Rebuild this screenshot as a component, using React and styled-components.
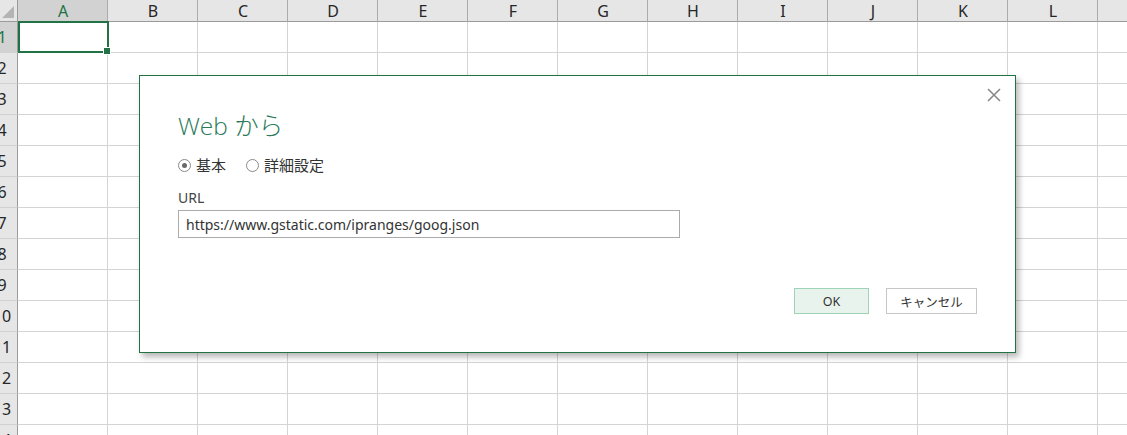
import React from "react";
import styled, { createGlobalStyle } from "styled-components";

const GlobalStyle = createGlobalStyle`
  html, body {
    margin: 0;
    padding: 0;
    background: #ffffff;
    overflow: hidden;
  }
  * { box-sizing: border-box; }
`;

const COLS = ["A", "B", "C", "D", "E", "F", "G", "H", "I", "J", "K", "L", "M"];
const ROWS = [1, 2, 3, 4, 5, 6, 7, 8, 9, 10, 11, 12, 13, 14];

const Page = styled.div`
  position: relative;
  width: 1127px;
  height: 435px;
  overflow: hidden;
  font-family: "Noto Sans", "Noto Sans CJK JP", sans-serif;
`;

const Sheet = styled.div`
  display: grid;
  grid-template-columns: 18px repeat(13, 90px);
  grid-template-rows: 22px repeat(14, 31px);
`;

const Corner = styled.div`
  position: relative;
  background: #e6e6e6;
  border-right: 1px solid #9b9b9b;
  border-bottom: 1px solid #9b9b9b;
  &::after {
    content: "";
    position: absolute;
    right: 3px;
    bottom: 3px;
    width: 0;
    height: 0;
    border-left: 12px solid transparent;
    border-bottom: 12px solid #b4b4b4;
  }
`;

const ColHead = styled.div`
  display: flex;
  align-items: center;
  justify-content: center;
  background: ${(p) => (p.$active ? "#d2d2d2" : "#e6e6e6")};
  color: ${(p) => (p.$active ? "#217346" : "#262626")};
  border-right: 1px solid #ababab;
  border-bottom: 1px solid #9b9b9b;
  font-size: 16px;
  line-height: 1;
  padding: 1px 0 0 1px;
`;

const RowHead = styled.div`
  overflow: hidden;
  background: ${(p) => (p.$active ? "#d2d2d2" : "#e6e6e6")};
  color: ${(p) => (p.$active ? "#217346" : "#262626")};
  border-right: 1px solid #9b9b9b;
  border-bottom: 1px solid #d0d0d0;
  font-size: 16px;
  display: flex;
  align-items: center;
`;

const RowLabel = styled.span`
  flex: 0 0 30px;
  margin-left: -13px;
  text-align: center;
`;

const Cell = styled.div`
  position: relative;
  border-right: 1px solid #d4d4d4;
  border-bottom: 1px solid #d4d4d4;
  background: #ffffff;
  ${(p) =>
    p.$selected &&
    `
    &::before {
      content: "";
      position: absolute;
      left: 0;
      top: -1px;
      right: -2px;
      bottom: -1px;
      border: 2px solid #217346;
      z-index: 2;
    }
    &::after {
      content: "";
      position: absolute;
      right: -4px;
      bottom: -3px;
      width: 6px;
      height: 6px;
      background: #217346;
      border: 1px solid #ffffff;
      z-index: 3;
    }
  `}
`;

const Dialog = styled.div`
  position: absolute;
  left: 139px;
  top: 75px;
  width: 877px;
  height: 278px;
  background: #ffffff;
  border: 1px solid #217346;
  box-shadow: 3px 4px 6px rgba(0, 0, 0, 0.28);
  padding: 30px 38px 38px 38px;
  display: flex;
  flex-direction: column;
  color: #444444;
  z-index: 10;
`;

const CloseButton = styled.button`
  position: absolute;
  top: 9px;
  right: 11px;
  width: 20px;
  height: 20px;
  padding: 0;
  border: none;
  background: transparent;
  display: flex;
  align-items: center;
  justify-content: center;
`;

const Title = styled.h1`
  margin: 0;
  font-family: "Open Sans", "Noto Sans CJK JP", sans-serif;
  font-weight: 300;
  font-size: 24.5px;
  line-height: 40px;
  color: #2a7a5a;
`;

const RadioRow = styled.div`
  display: flex;
  align-items: center;
  margin-top: 9px;
  font-size: 15px;
  line-height: 20px;
  color: #333;
`;

const RadioLabel = styled.label`
  display: flex;
  align-items: center;
  gap: 5px;
  margin-right: ${(p) => p.$gap || 0}px;
`;

const RadioCircle = styled.span`
  width: 13px;
  height: 13px;
  border-radius: 50%;
  border: 1px solid #8a8a8a;
  background: #fff;
  display: flex;
  align-items: center;
  justify-content: center;
  &::after {
    content: "";
    width: 5px;
    height: 5px;
    border-radius: 50%;
    background: ${(p) => (p.$checked ? "#6a6a6a" : "transparent")};
  }
`;

const FieldLabel = styled.div`
  margin-top: 14px;
  font-size: 14px;
  line-height: 18px;
  color: #444;
`;

const UrlInput = styled.div`
  margin-top: 3px;
  width: 502px;
  height: 28px;
  border: 1px solid #ababab;
  padding: 0 7px;
  display: flex;
  align-items: center;
  font-size: 14px;
  color: #333;
`;

const Footer = styled.div`
  margin-top: auto;
  display: flex;
  justify-content: flex-end;
  gap: 17px;
`;

const Button = styled.button`
  height: 26px;
  min-width: ${(p) => p.$w}px;
  font-family: "Noto Sans", "Noto Sans CJK JP", sans-serif;
  font-size: 12.5px;
  color: #333;
  background: ${(p) => (p.$primary ? "#e9f3ee" : "#ffffff")};
  border: 1px solid ${(p) => (p.$primary ? "#9ed3b5" : "#c6c6c6")};
  padding: 0 8px;
`;

export default function App() {
  return (
    <Page>
      <GlobalStyle />
      <Sheet>
        <Corner />
        {COLS.map((c) => (
          <ColHead key={c} $active={c === "A"}>
            {c}
          </ColHead>
        ))}
        {ROWS.map((r) => (
          <React.Fragment key={r}>
            <RowHead $active={r === 1}>
              <RowLabel>{r}</RowLabel>
            </RowHead>
            {COLS.map((c) => (
              <Cell key={c} $selected={r === 1 && c === "A"} />
            ))}
          </React.Fragment>
        ))}
      </Sheet>

      <Dialog>
        <CloseButton aria-label="閉じる">
          <svg width="14" height="14" viewBox="0 0 14 14">
            <path d="M1 1 L13 13 M13 1 L1 13" stroke="#8a8a8a" strokeWidth="1.6" />
          </svg>
        </CloseButton>
        <Title>Web から</Title>
        <RadioRow>
          <RadioLabel $gap={20}>
            <RadioCircle $checked />
            基本
          </RadioLabel>
          <RadioLabel>
            <RadioCircle />
            詳細設定
          </RadioLabel>
        </RadioRow>
        <FieldLabel>URL</FieldLabel>
        <UrlInput>https://www.gstatic.com/ipranges/goog.json</UrlInput>
        <Footer>
          <Button $primary $w={75}>OK</Button>
          <Button $w={91}>キャンセル</Button>
        </Footer>
      </Dialog>
    </Page>
  );
}
